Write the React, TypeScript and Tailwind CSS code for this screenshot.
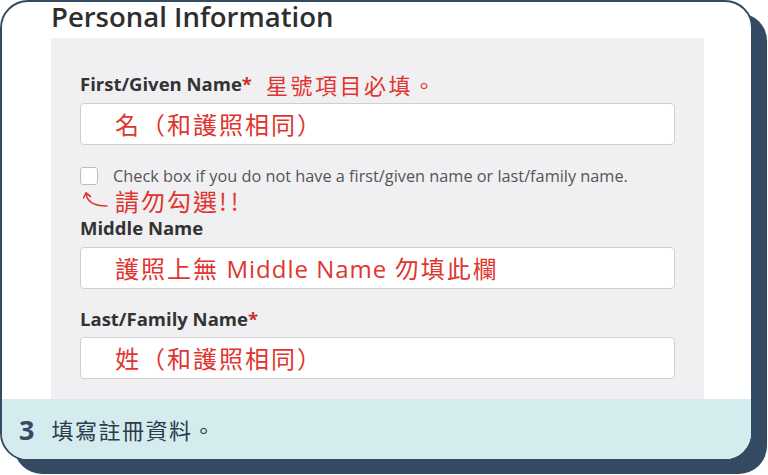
import React from "react";

const red = "text-[#e0352f]";
const cjk = "[font-family:'Noto_Sans_CJK_TC','Open_Sans',sans-serif]";
const os = "[font-family:'Open_Sans','Noto_Sans_CJK_TC',sans-serif]";

function Input({ children }: { children: React.ReactNode }) {
  return (
    <div className="h-[42px] w-full rounded-[4px] border border-[#cfcfcf] bg-white flex items-center pl-[34px]">
      <span className={`${cjk} ${red} text-[24px] leading-none tracking-[2px]`}>{children}</span>
    </div>
  );
}

export default function App() {
  return (
    <div className="w-[768px] h-[475px] bg-white overflow-hidden">
      <div className="w-[753px] h-[461px] rounded-[28px] border-2 border-[#344a63] shadow-[14px_13px_0_#344a63] bg-white overflow-hidden flex flex-col">
        <div className={`${os} h-[36px] pl-[49px] text-[27.5px] font-semibold leading-[27px] pt-[1px] text-[#2e2e2e]`}>
          Personal Information
        </div>
        <div className="flex-1 ml-[49px] w-[653px] bg-[#f0f0f2] px-[29px] pt-[34px] flex flex-col">
          <div className="h-[24px] flex items-center">
            <span className={`${os} font-bold text-[18.5px] text-[#333]`}>
              First/Given Name<span className="text-[#c9302c]">*</span>
            </span>
            <span className={`${cjk} ${red} text-[22px] ml-[14px] tracking-[2.5px]`}>星號項目必填。</span>
          </div>
          <div className="mt-[7px]">
            <Input>名（和護照相同）</Input>
          </div>
          <div className="mt-[22px] h-[18px] flex items-center">
            <div className="w-[18px] h-[18px] rounded-[3px] border border-[#bdbdbd] bg-white" />
            <span className={`${os} text-[16.3px] leading-none text-[#555] ml-[15px]`}>
              Check box if you do not have a first/given name or last/family name.
            </span>
          </div>
          <div className="mt-[3px] h-[26px] flex items-center">
            <svg width="30" height="20" viewBox="0 0 30 20" className="ml-[3px]" fill="none" stroke="#e0352f" strokeWidth="1.6" strokeLinecap="round" strokeLinejoin="round">
              <path d="M3 2 Q4 15 24 15" />
              <path d="M0.5 7 L3 2 L7.5 5.5" />
            </svg>
            <span className={`${cjk} ${red} text-[24px] ml-[2px] tracking-[2px] leading-none`}>
              請勿勾選<span className="tracking-[4px]">!!</span>
            </span>
          </div>
          <div className="mt-[2px] h-[24px] flex items-center">
            <span className={`${os} font-bold text-[18.5px] text-[#333]`}>Middle Name</span>
          </div>
          <div className="mt-[7px]">
            <Input>
              護照上無 <span className={`${os} tracking-[1px]`}>Middle Name</span> 勿填此欄
            </Input>
          </div>
          <div className="mt-[18px] h-[24px] flex items-center">
            <span className={`${os} font-bold text-[18.5px] text-[#333]`}>
              Last/Family Name<span className="text-[#c9302c]">*</span>
            </span>
          </div>
          <div className="mt-[6px]">
            <Input>姓（和護照相同）</Input>
          </div>
        </div>
        <div className="h-[60px] bg-[#d4ecee] flex items-center pl-[17px] shrink-0">
          <span className={`${os} font-bold text-[27px] text-[#344a63] leading-none`}>3</span>
          <span className={`${cjk} text-[22px] text-[#2d3b4d] ml-[17px] tracking-[1.5px] leading-none`}>填寫註冊資料。</span>
        </div>
      </div>
    </div>
  );
}
